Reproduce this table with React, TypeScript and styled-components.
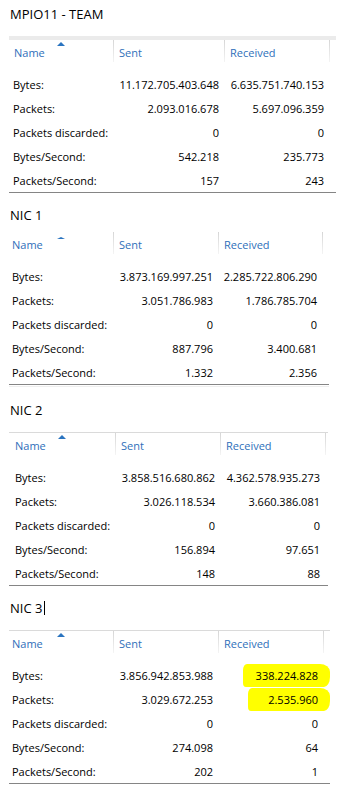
import React from "react";
import styled, { createGlobalStyle } from "styled-components";

const Global = createGlobalStyle`
  html, body { margin: 0; padding: 0; background: #ffffff; }
  body { font-family: "Open Sans", "Noto Sans", sans-serif; color: #000000; }
`;

type Highlight = { left: number; right: number };
type Stat = { label: string; sent: string; received: string; hl?: Highlight };
type Cfg = {
  title: string;
  caret?: boolean;
  top: number;
  titleGap: number;
  border: "band" | "line" | "none";
  cols: [number, number, number, number];
  labelPad: number;
  headPad: number;
  arrow: "full" | "cut";
  shadow?: boolean;
  rows: Stat[];
};

const labels = ["Bytes:", "Packets:", "Packets discarded:", "Bytes/Second:", "Packets/Second:"];

const mk = (vals: [string, string][], hl?: (Highlight | undefined)[]): Stat[] =>
  vals.map(([s, r], i) => ({ label: labels[i], sent: s, received: r, hl: hl ? hl[i] : undefined }));

const sections: Cfg[] = [
  {
    title: "MPIO11 - TEAM",
    top: 4,
    titleGap: 12,
    border: "band",
    cols: [104, 111, 105, 7],
    labelPad: 4,
    headPad: 5,
    arrow: "full",
    rows: mk([
      ["11.172.705.403.648", "6.635.751.740.153"],
      ["2.093.016.678", "5.697.096.359"],
      ["0", "0"],
      ["542.218", "235.773"],
      ["157", "243"],
    ]),
  },
  {
    title: "NIC 1",
    top: 12,
    titleGap: 7,
    border: "none",
    cols: [104, 105, 104, 7],
    labelPad: 3,
    headPad: 3,
    arrow: "cut",
    shadow: true,
    rows: mk([
      ["3.873.169.997.251", "2.285.722.806.290"],
      ["3.051.786.983", "1.786.785.704"],
      ["0", "0"],
      ["887.796", "3.400.681"],
      ["1.332", "2.356"],
    ]),
  },
  {
    title: "NIC 2",
    top: 15,
    titleGap: 12,
    border: "line",
    cols: [106, 105, 105, 3],
    labelPad: 6,
    headPad: 6,
    arrow: "full",
    rows: mk([
      ["3.858.516.680.862", "4.362.578.935.273"],
      ["3.026.118.534", "3.660.386.081"],
      ["0", "0"],
      ["156.894", "97.651"],
      ["148", "88"],
    ]),
  },
  {
    title: "NIC 3",
    caret: true,
    top: 12,
    titleGap: 12,
    border: "line",
    cols: [104, 105, 105, 7],
    labelPad: 3,
    headPad: 3,
    arrow: "full",
    rows: mk(
      [
        ["3.856.942.853.988", "338.224.828"],
        ["3.029.672.253", "2.535.960"],
        ["0", "0"],
        ["274.098", "64"],
        ["202", "1"],
      ],
      [{ left: 13, right: 12 }, { left: 20, right: 12 }]
    ),
  },
];

const Page = styled.div`
  padding: 0 0 0 9px;
`;

const Section = styled.section<{ $top: number }>`
  margin-top: ${(p) => p.$top}px;
`;

const Title = styled.div<{ $gap: number }>`
  font-size: 13px;
  line-height: 20px;
  height: 20px;
  padding-left: 1px;
  margin-bottom: ${(p) => p.$gap}px;
  color: #000;
  display: flex;
  align-items: center;
`;

const Caret = styled.span`
  display: inline-block;
  width: 1px;
  height: 14px;
  background: #000;
  margin-left: 2px;
`;

const Table = styled.div<{ $w: number }>`
  width: ${(p) => p.$w}px;
`;

const HeadBorder = styled.div<{ $kind: "band" | "line" | "none" }>`
  height: ${(p) => (p.$kind === "band" ? 4 : p.$kind === "line" ? 1 : 0)}px;
  background: ${(p) => (p.$kind === "band" ? "#ebebeb" : "#dadada")};
`;

const Grid = styled.div<{ $cols: string; $h: number }>`
  display: grid;
  grid-template-columns: ${(p) => p.$cols};
  height: ${(p) => p.$h}px;
`;

const HeadCell = styled.div<{ $pad: number; $sep: boolean }>`
  position: relative;
  padding: 5px 0 0 ${(p) => p.$pad}px;
  font-size: 11px;
  line-height: 16px;
  color: #2f6fba;
  white-space: nowrap;
  &::before {
    content: "";
    display: ${(p) => (p.$sep ? "block" : "none")};
    position: absolute;
    left: 0;
    top: 0;
    width: 1px;
    height: 22px;
    background: linear-gradient(#d6d6d6, #f4f4f4);
  }
`;

const SortArrow = styled.span<{ $cut: boolean }>`
  position: absolute;
  left: 50%;
  top: ${(p) => (p.$cut ? 5 : 2)}px;
  margin-left: -4px;
  width: 0;
  height: 0;
  border-left: 4px solid transparent;
  border-right: 4px solid transparent;
  border-bottom: ${(p) => (p.$cut ? 2 : 4)}px solid #2a74c0;
`;

const Cell = styled.div<{ $pad: number; $right?: boolean }>`
  display: flex;
  align-items: center;
  justify-content: ${(p) => (p.$right ? "flex-end" : "flex-start")};
  padding: ${(p) => (p.$right ? `0 5px 0 0` : `0 0 0 ${p.$pad}px`)};
  font-size: 11px;
  white-space: nowrap;
  color: #000;
`;

const Marker = styled.span<{ $l: number; $r: number }>`
  display: inline-block;
  background: #ffff00;
  padding: 5px ${(p) => p.$r}px 5px ${(p) => p.$l}px;
  margin: 0 -${(p) => p.$r}px 0 -${(p) => p.$l}px;
  border-radius: 4px 10px 6px 3px / 6px 8px 10px 4px;
  line-height: 13px;
`;

const BottomRule = styled.div<{ $shadow?: boolean }>`
  height: 1px;
  background: #858585;
  margin-bottom: ${(p) => (p.$shadow ? 0 : 0)}px;
  box-shadow: ${(p) => (p.$shadow ? "0 2px 0 #eeeeee" : "none")};
`;

function StatTable({ cfg }: { cfg: Cfg }) {
  const cols = cfg.cols.map((c) => `${c}px`).join(" ");
  const width = cfg.cols.reduce((a, b) => a + b, 0);
  return (
    <Section $top={cfg.top}>
      <Title $gap={cfg.titleGap}>
        {cfg.title}
        {cfg.caret && <Caret />}
      </Title>
      <Table $w={width}>
        <HeadBorder $kind={cfg.border} />
        <Grid $cols={cols} $h={32}>
          <HeadCell $pad={cfg.headPad} $sep={false}>
            Name
            <SortArrow $cut={cfg.arrow === "cut"} />
          </HeadCell>
          <HeadCell $pad={6} $sep>
            Sent
          </HeadCell>
          <HeadCell $pad={6} $sep>
            Received
          </HeadCell>
          <HeadCell $pad={0} $sep />
        </Grid>
        {cfg.rows.map((r) => (
          <Grid key={r.label} $cols={cols} $h={24}>
            <Cell $pad={cfg.labelPad}>{r.label}</Cell>
            <Cell $pad={0} $right>
              {r.sent}
            </Cell>
            <Cell $pad={0} $right>
              {r.hl ? (
                <Marker $l={r.hl.left} $r={r.hl.right}>
                  {r.received}
                </Marker>
              ) : (
                r.received
              )}
            </Cell>
            <div />
          </Grid>
        ))}
        <BottomRule $shadow={cfg.shadow} />
      </Table>
    </Section>
  );
}

export default function App() {
  return (
    <>
      <Global />
      <Page>
        {sections.map((s) => (
          <StatTable key={s.title} cfg={s} />
        ))}
      </Page>
    </>
  );
}
